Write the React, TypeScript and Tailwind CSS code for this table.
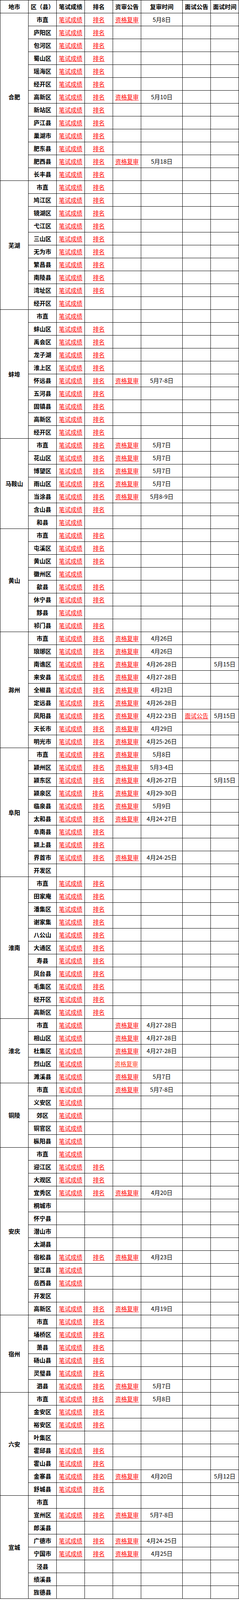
import React from 'react';

// flags: s = 笔试成绩, r = 排名, v = 资格复审, n = 面试公告
// R / V are the two odd links that render slightly off in the source sheet
interface Row {
  name: string;
  flags: string;
  date: string;
  time: string;
}

function r(name: string, flags = '', date = '', time = ''): Row {
  return { name, flags, date, time };
}

const cities: { city: string; rows: Row[] }[] = [
  {
    city: '合肥',
    rows: [
      r('市直', 'srv', '5月8日'),
      r('庐阳区', 'sr'),
      r('包河区', 'sr'),
      r('蜀山区', 'sr'),
      r('瑶海区', 'sr'),
      r('经开区', 'sr'),
      r('高新区', 'srv', '5月10日'),
      r('新站区', 'sr'),
      r('庐江县', 'sr'),
      r('巢湖市', 'sr'),
      r('肥东县', 'sr'),
      r('肥西县', 'srv', '5月18日'),
      r('长丰县', 'sr'),
    ],
  },
  {
    city: '芜湖',
    rows: [
      r('市直', 'sr'),
      r('鸠江区', 'sr'),
      r('镜湖区', 'sr'),
      r('弋江区', 'sr'),
      r('三山区', 'sr'),
      r('无为市', 'sr'),
      r('繁昌县', 'sr'),
      r('南陵县', 'sr'),
      r('湾址区', 'sr'),
      r('经开区', 's'),
    ],
  },
  {
    city: '蚌埠',
    rows: [
      r('市直', 's'),
      r('蚌山区', 'sr'),
      r('禹会区', 'sr'),
      r('龙子湖', 'sr'),
      r('淮上区', 'sr'),
      r('怀远县', 'srv', '5月7-8日'),
      r('五河县', 'sr'),
      r('固镇县', 'sr'),
      r('高新区', 'sr'),
      r('经开区', 'sr'),
    ],
  },
  {
    city: '马鞍山',
    rows: [
      r('市直', 'srv', '5月7日'),
      r('花山区', 'srv', '5月7日'),
      r('博望区', 'srv', '5月7日'),
      r('雨山区', 'srv', '5月7日'),
      r('当涂县', 'srv', '5月8-9日'),
      r('含山县', 'sr'),
      r('和县', 's'),
    ],
  },
  {
    city: '黄山',
    rows: [
      r('市直', 'sr'),
      r('屯溪区', 'sr'),
      r('黄山区', 'sr'),
      r('徽州区', 's'),
      r('歙县', 'sr'),
      r('休宁县', 'sr'),
      r('黟县', 's'),
      r('祁门县', 'sr'),
    ],
  },
  {
    city: '滁州',
    rows: [
      r('市直', 'srv', '4月26日'),
      r('琅琊区', 'srv', '4月26日'),
      r('南谯区', 'srv', '4月26-28日', '5月15日'),
      r('来安县', 'srv', '4月27-28日'),
      r('全椒县', 'srv', '4月23日'),
      r('定远县', 'srv', '4月26-28日'),
      r('凤阳县', 'srvn', '4月22-23日', '5月15日'),
      r('天长市', 'srv', '4月29日'),
      r('明光市', 'srv', '4月25-26日'),
    ],
  },
  {
    city: '阜阳',
    rows: [
      r('市直', 'srv', '5月8日'),
      r('颍州区', 'srv', '5月3-4日'),
      r('颍东区', 'srv', '4月26-27日', '5月15日'),
      r('颍泉区', 'sRv', '4月29-30日'),
      r('临泉县', 'srv', '5月9日'),
      r('太和县', 'srv', '4月24-27日'),
      r('阜南县', 'sr'),
      r('颍上县', 'sr'),
      r('界首市', 'srv', '4月24-25日'),
      r('开发区'),
    ],
  },
  {
    city: '淮南',
    rows: [
      r('市直', 'sr'),
      r('田家庵', 'sr'),
      r('潘集区', 'sr'),
      r('谢家集', 'sr'),
      r('八公山', 'sr'),
      r('大通区', 'sr'),
      r('寿县', 'sr'),
      r('凤台县', 'sr'),
      r('毛集区', 'sr'),
      r('经开区', 'sr'),
      r('高新区', 'sr'),
    ],
  },
  {
    city: '淮北',
    rows: [
      r('市直', 'sv', '4月27-28日'),
      r('相山区', 'sv', '4月27-28日'),
      r('杜集区', 'sv', '4月27-28日'),
      r('烈山区', 'sV'),
      r('濉溪县', 'sv', '5月7日'),
    ],
  },
  {
    city: '铜陵',
    rows: [
      r('市直', 'sv', '5月7-8日'),
      r('义安区', 's'),
      r('郊区', 's'),
      r('铜官区', 's'),
      r('枞阳县', 's'),
    ],
  },
  {
    city: '安庆',
    rows: [
      r('市直', 's'),
      r('迎江区', 'sr'),
      r('大观区', 'sr'),
      r('宜秀区', 'srv', '4月20日'),
      r('桐城市'),
      r('怀宁县'),
      r('潜山市'),
      r('太湖县'),
      r('宿松县', 'srv', '4月23日'),
      r('望江县', 's'),
      r('岳西县', 's'),
      r('开发区'),
      r('高新区', 'srv', '4月19日'),
    ],
  },
  {
    city: '宿州',
    rows: [
      r('市直', 'sr'),
      r('埇桥区', 'sr'),
      r('萧县', 'sr'),
      r('砀山县', 'sr'),
      r('灵璧县', 'sr'),
      r('泗县', 'srv', '5月7日'),
    ],
  },
  {
    city: '六安',
    rows: [
      r('市直', 'sRv', '5月8日'),
      r('金安区', 'sr'),
      r('裕安区', 'sr'),
      r('叶集区'),
      r('霍邱县', 'sr'),
      r('霍山县', 'sr'),
      r('金寨县', 'srv', '4月20日', '5月12日'),
      r('舒城县', 'sr'),
    ],
  },
  {
    city: '宣城',
    rows: [
      r('市直'),
      r('宣州区', 'srv', '5月7-8日'),
      r('郎溪县'),
      r('广德市', 'srv', '4月24-25日'),
      r('宁国市', 'srv', '4月25日'),
      r('泾县'),
      r('绩溪县'),
      r('旌德县'),
    ],
  },
];

const headers = ['地市', '区（县）', '笔试成绩', '排名', '资审公告', '复审时间', '面试公告', '面试时间'];

// rows are kept a little short so the whole sheet fits in the captured frame
const cell = 'shrink-0 flex items-center justify-center border-r border-b border-black whitespace-nowrap';
const narrow = `${cell} w-[72px]`;
const wide = `${cell} w-[106px]`;

function Link({ children, className = '' }: { children: React.ReactNode; className?: string }) {
  return (
    <a href="#" className={`text-[#ff0000] underline underline-offset-[2px] decoration-1 ${className}`}>
      {children}
    </a>
  );
}

function DataRow({ row }: { row: Row }) {
  const f = row.flags;
  return (
    <div className="flex h-[33px]">
      <div className={`${narrow} font-bold`}>{row.name}</div>
      <div className={narrow}>{f.includes('s') && <Link>笔试成绩</Link>}</div>
      <div className={narrow}>
        {f.includes('r') && <Link>排名</Link>}
        {f.includes('R') && <Link className="mr-[3px]">排名</Link>}
      </div>
      <div className={narrow}>
        {f.includes('v') && <Link>资格复审</Link>}
        {f.includes('V') && <Link className="mr-[3px] text-[#ff3a1a]">资格复审</Link>}
      </div>
      <div className={wide}>{row.date}</div>
      <div className={narrow}>{f.includes('n') && <Link>面试公告</Link>}</div>
      <div className={narrow}>{row.time}</div>
    </div>
  );
}

export default function App() {
  return (
    <div className="bg-white w-[611px] text-black font-['Noto_Sans_CJK_SC','Liberation_Sans',sans-serif] text-[15px] leading-[20px]">
      <div className="border-l border-t border-black w-[611px]">
        <div className="flex h-[33px] font-bold">
          {headers.map((h, i) => (
            <div key={h} className={i === 5 ? wide : narrow}>
              {h}
            </div>
          ))}
        </div>
        {cities.map((c) => (
          <div key={c.city} className="flex">
            <div className={`${narrow} font-bold`}>{c.city}</div>
            <div className="flex flex-col">
              {c.rows.map((row) => (
                <DataRow key={row.name} row={row} />
              ))}
            </div>
          </div>
        ))}
      </div>
    </div>
  );
}
